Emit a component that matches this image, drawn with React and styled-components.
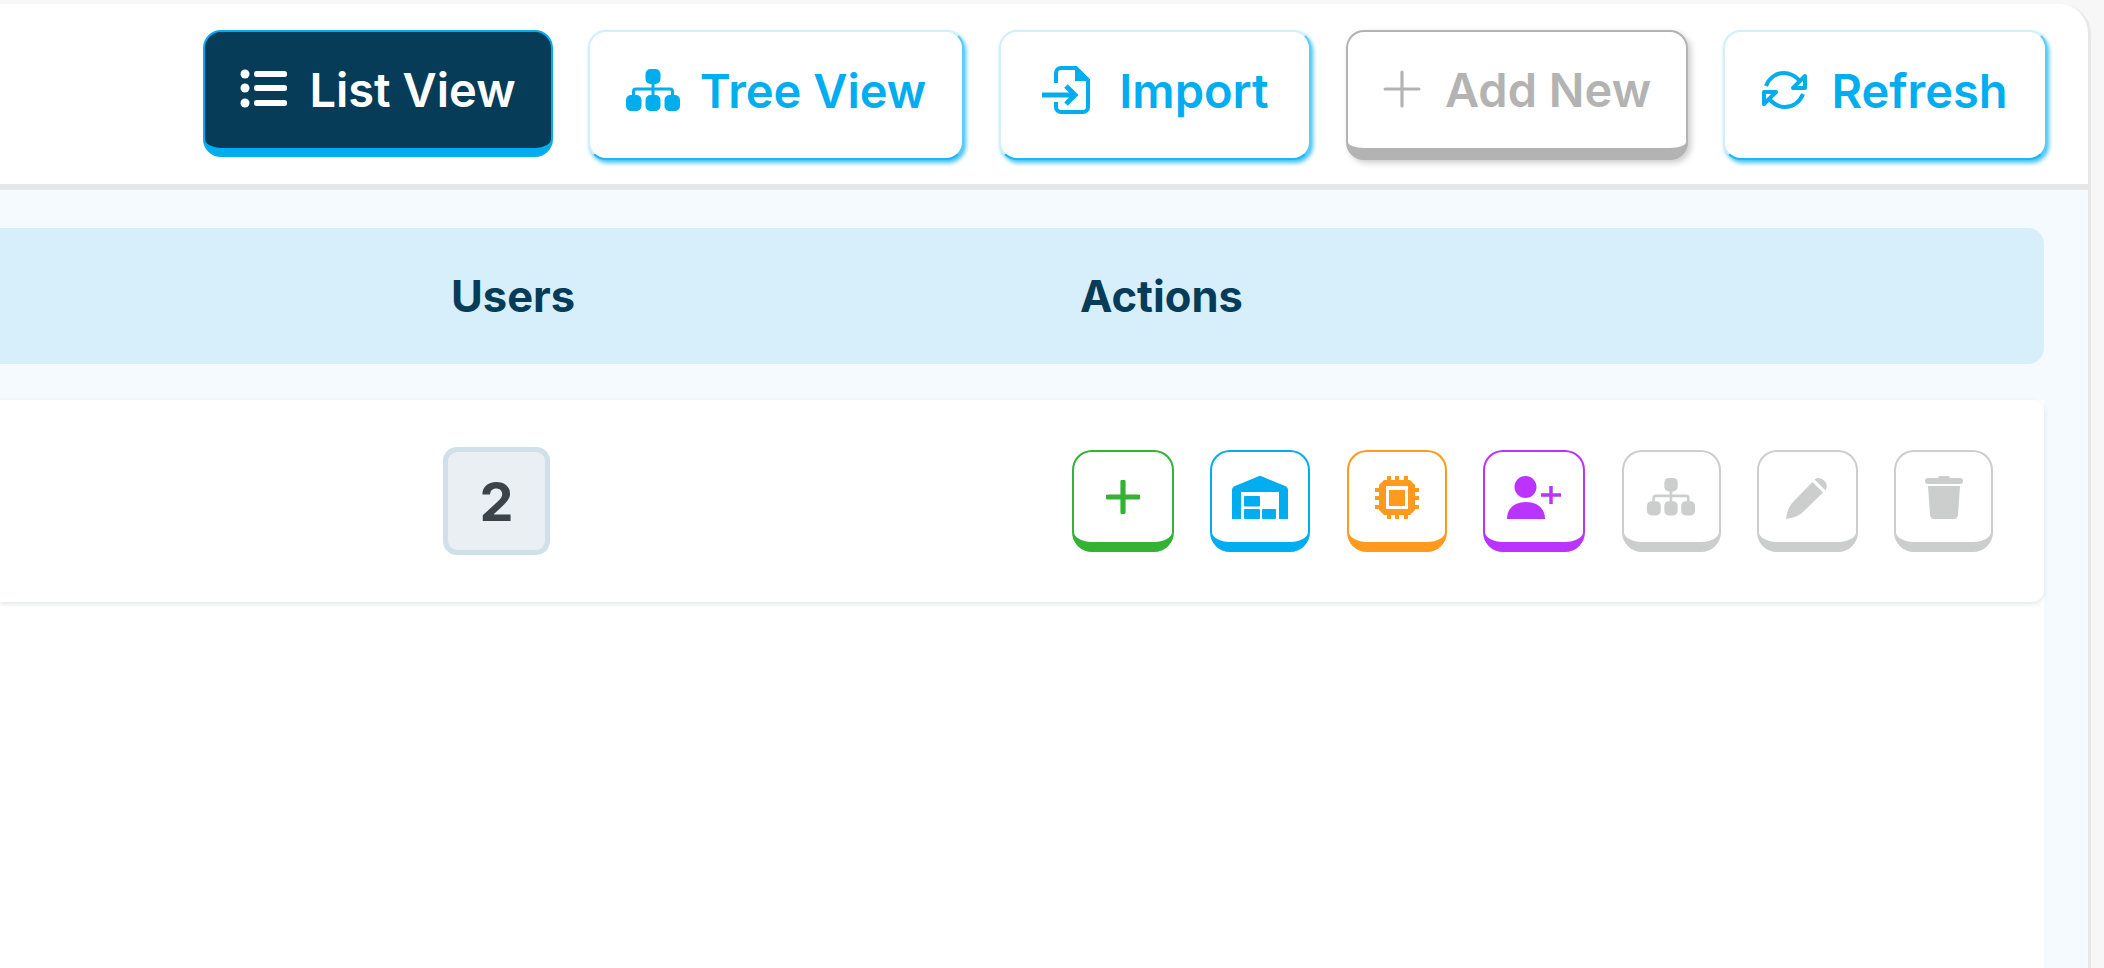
import React from 'react'
import styled, { createGlobalStyle } from 'styled-components'

const GlobalStyle = createGlobalStyle`
  html, body {
    margin: 0;
    padding: 0;
    height: 100%;
    background: #f7f7f7;
    font-family: Inter, "Liberation Sans", sans-serif;
  }
  #root {
    height: 100%;
  }
`

const Page = styled.div`
  height: 968px;
  box-sizing: border-box;
  padding: 4px 13px 0 0;
  overflow: hidden;
`

const Card = styled.div`
  height: 100%;
  display: flex;
  flex-direction: column;
  background: #fff;
  border-right: 3px solid #e8e8e8;
  border-top-right-radius: 30px;
  overflow: hidden;
`

const Toolbar = styled.div`
  height: 186px;
  flex: none;
  box-sizing: border-box;
  display: flex;
  justify-content: flex-end;
  align-items: flex-start;
  gap: 35px;
  padding: 26px 41px 0 0;
  border-bottom: 6px solid #e5e6e7;
`

const ToolButton = styled.div`
  width: ${p => p.$w}px;
  height: ${p => (p.$variant === 'active' ? 127 : 130)}px;
  box-sizing: border-box;
  display: flex;
  align-items: center;
  justify-content: center;
  gap: ${p => p.$gap}px;
  padding-bottom: 2px;
  border-radius: 18px;
  font-size: 47px;
  font-weight: 600;
  white-space: nowrap;
  ${p => p.$variant === 'active' && `
    background: #063c58;
    color: #fff;
    border: 2px solid #00aeef;
    border-bottom-width: 9px;
  `}
  ${p => p.$variant === 'outline' && `
    background: #fff;
    color: #00aeef;
    padding-bottom: 10px;
    border: 2px solid #d2effc;
    border-bottom: 2px solid #1fb7f1;
    border-right-color: #5ccbf5;
    box-shadow: 2px 3px 4px rgba(0, 174, 239, 0.75);
  `}
  ${p => p.$variant === 'disabled' && `
    background: #fff;
    color: #b3b3b3;
    border: 2px solid #b3b3b3;
    border-bottom-width: 12px;
    box-shadow: 3px 3px 6px rgba(0, 0, 0, 0.2);
  `}
`

const Content = styled.div`
  flex: 1;
  display: flex;
  flex-direction: column;
  background: #f5fafe;
  padding: 38px 44px 0 0;
`

const HeaderRow = styled.div`
  height: 136px;
  flex: none;
  display: grid;
  grid-template-columns: 629px 1fr;
  align-items: center;
  padding-left: 451px;
  background: #d7effb;
  border-radius: 0 16px 16px 0;
  color: #063c58;
  font-size: 43.5px;
  font-weight: 700;
`

const TableBody = styled.div`
  flex: 1;
  margin-top: 36px;
  background: #fff;
`

const Row = styled.div`
  height: 202px;
  box-sizing: border-box;
  display: grid;
  grid-template-columns: 629px 1fr;
  align-items: center;
  padding-left: 443px;
  background: #fff;
  border-radius: 0 12px 12px 0;
  box-shadow: 0 2px 5px rgba(120, 140, 160, 0.22);
`

const Badge = styled.div`
  width: 107px;
  height: 108px;
  box-sizing: border-box;
  display: flex;
  align-items: center;
  justify-content: center;
  background: #e9eff3;
  border: 5px solid #cfe0ea;
  border-radius: 14px;
  color: #3c4449;
  font-size: 54px;
  font-weight: 700;
`

const Actions = styled.div`
  display: flex;
  align-items: center;
  gap: 36.4px;
`

const ActionButton = styled.div`
  width: ${p => p.$w}px;
  height: 102px;
  box-sizing: border-box;
  display: flex;
  align-items: center;
  justify-content: center;
  background: #fff;
  color: ${p => p.$color};
  border: 2px solid ${p => p.$color};
  border-bottom-width: 10px;
  border-radius: 20px;
`

const Blue = '#00aeef'
const Gray = '#cccecd'

function ListIcon () {
  return (
    <svg width="48" height="42" viewBox="0 0 48 42" fill="currentColor">
      <circle cx="5" cy="6" r="4.5" />
      <circle cx="5" cy="20" r="4.5" />
      <circle cx="5" cy="35" r="4.5" />
      <rect x="14" y="3" width="33" height="6" rx="2.5" />
      <rect x="14" y="17" width="33" height="6" rx="2.5" />
      <rect x="14" y="32" width="33" height="6" rx="2.5" />
    </svg>
  )
}

function TreeIcon ({ size = 54, color = 'currentColor' }) {
  return (
    <svg width={size} height={size * 0.78} viewBox="0 0 54 42" fill={color}>
      <rect x="19.500" y="0" width="15" height="15" rx="5" />
      <rect x="0" y="26" width="15.500" height="16" rx="5" />
      <rect x="19.500" y="26" width="15" height="16" rx="5" />
      <rect x="38.500" y="26" width="15.500" height="16" rx="5" />
      <path d="M25.500 14h3v4.500h15.500a4 4 0 0 1 4 4V27h-3v-4.500a1 1 0 0 0-1-1H28.500V27h-3v-5.500H10a1 1 0 0 0-1 1V27H6v-4.500a4 4 0 0 1 4-4h15.500z" />
    </svg>
  )
}

function ImportIcon () {
  return (
    <svg width="50" height="48" viewBox="0 0 50 48" fill="none" stroke="currentColor" strokeWidth="4">
      <path d="M15 17V7a5 5 0 0 1 5-5h15l12 12v27a5 5 0 0 1-5 5H20a5 5 0 0 1-5-5v-5" />
      <path d="M35 2v12h12" fill="currentColor" strokeWidth="2" />
      <path d="M1 29h32" strokeWidth="5" />
      <path d="M25 20l9 9-9 9" strokeWidth="5" />
    </svg>
  )
}

function PlusIcon ({ size = 38, weight = 3 }) {
  return (
    <svg width={size} height={size} viewBox="0 0 36 36" stroke="currentColor" strokeWidth={weight} strokeLinecap="round">
      <path d="M18 2v32M2 18h32" />
    </svg>
  )
}

function RefreshIcon () {
  return (
    <svg width="45" height="40" viewBox="0 0 45 40" fill="none" stroke="currentColor" strokeWidth="4">
      <path d="M4 16C7 8 14 3 22 3c6 0 11 3 15 7" />
      <path d="M41 24c-3 8-10 13-18 13-6 0-11-3-15-7" />
      <path d="M43 6v12H31z" strokeLinejoin="round" />
      <path d="M2 34V22h12z" strokeLinejoin="round" />
    </svg>
  )
}

function WarehouseIcon () {
  return (
    <svg width="56" height="43" viewBox="0 0 56 43" fill="currentColor">
      <path fillRule="evenodd" d="M0 14c0-2 1-3 3-4L26 .5c1.500-.6 2.500-.6 4 0L53 10c2 1 3 2 3 4v29H47V16H9v27H0z" />
      <rect x="12" y="20" width="16" height="10.500" rx="1" />
      <rect x="12" y="33" width="16" height="10" rx="1" />
      <rect x="30" y="33" width="14" height="10" rx="1" />
    </svg>
  )
}

function ChipIcon () {
  return (
    <svg width="44" height="43" viewBox="0 0 44 43" fill="currentColor">
      <path d="M12 0h4v5h-4zM20 0h4v5h-4zM29 0h4v5h-4zM12 38h4v5h-4zM20 38h4v5h-4zM29 38h4v5h-4z" />
      <path d="M0 12h5v4H0zM0 20h5v4H0zM0 29h5v4H0zM39 12h5v4h-5zM39 20h5v4h-5zM39 29h5v4h-5z" />
      <path fillRule="evenodd" d="M9 4h26l5 5v25l-5 5H9l-5-5V9zM11 10v23h22V10z" />
      <rect x="14" y="14" width="16" height="16" />
    </svg>
  )
}

function PersonAddIcon () {
  return (
    <svg width="54" height="43" viewBox="0 0 54 43" fill="currentColor">
      <circle cx="18.500" cy="11" r="11" />
      <path d="M0 43c0-11 8-17 19-17s19 6 19 17z" />
      <path d="M34 19h20M44 10v18" stroke="currentColor" strokeWidth="3.500" fill="none" />
    </svg>
  )
}

function PencilIcon () {
  return (
    <svg width="43" height="43" viewBox="0 0 43 43" fill="currentColor">
      <path d="M28.500 3.500A8 8 0 0 1 39.500 14.500z" />
      <path d="M26.500 6L37 16.500 17 36C13 40 6 42 0 43c1-7 3-13 7-17z" />
    </svg>
  )
}

function TrashIcon () {
  return (
    <svg width="38" height="43" viewBox="0 0 38 43" fill="currentColor">
      <path d="M13 2c0-1 1-2 2-2h8c1 0 2 1 2 2h10c2 0 3 1 3 3s-1 3-3 3H3C1 8 0 7 0 5s1-3 3-3z" />
      <path d="M3 10h32l-2 29c0 2-2 4-4 4H9c-2 0-4-2-4-4z" />
    </svg>
  )
}

export default function App () {
  return (
    <Page>
      <GlobalStyle />
      <Card>
        <Toolbar>
          <ToolButton $variant="active" $w={350} $gap={21}><ListIcon />List View</ToolButton>
          <ToolButton $variant="outline" $w={376} $gap={20}><TreeIcon />Tree View</ToolButton>
          <ToolButton $variant="outline" $w={312} $gap={28}><ImportIcon />Import</ToolButton>
          <ToolButton $variant="disabled" $w={342} $gap={24}><PlusIcon />Add New</ToolButton>
          <ToolButton $variant="outline" $w={324} $gap={24}><RefreshIcon />Refresh</ToolButton>
        </Toolbar>
        <Content>
          <HeaderRow>
            <span>Users</span>
            <span>Actions</span>
          </HeaderRow>
          <TableBody>
            <Row>
              <Badge>2</Badge>
              <Actions>
                <ActionButton $w={102} $color="#33b233"><PlusIcon size={34} weight={5.5} /></ActionButton>
                <ActionButton $w={100} $color={Blue}><WarehouseIcon /></ActionButton>
                <ActionButton $w={100} $color="#ff9a1f"><ChipIcon /></ActionButton>
                <ActionButton $w={102} $color="#bb33ff"><PersonAddIcon /></ActionButton>
                <ActionButton $w={99} $color={Gray}><TreeIcon size={48} /></ActionButton>
                <ActionButton $w={101} $color={Gray}><PencilIcon /></ActionButton>
                <ActionButton $w={99} $color={Gray}><TrashIcon /></ActionButton>
              </Actions>
            </Row>
          </TableBody>
        </Content>
      </Card>
    </Page>
  )
}
